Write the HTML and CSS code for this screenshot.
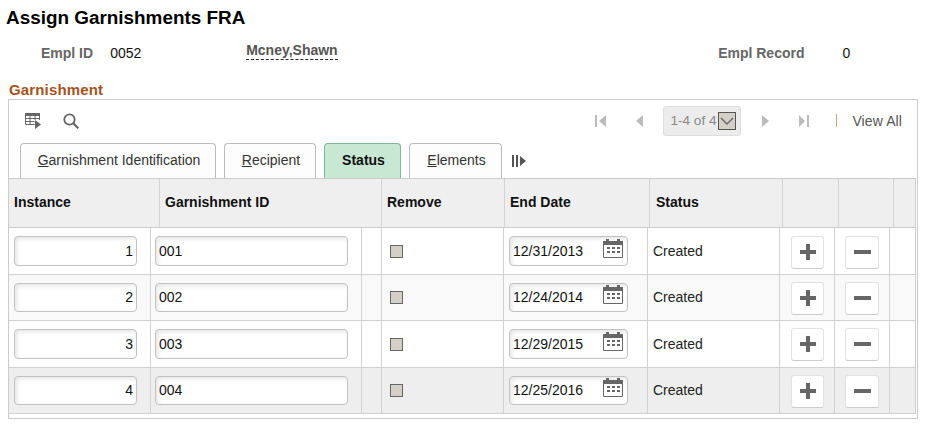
FILE: index.html
```html
<!DOCTYPE html>
<html lang="en">
<head>
<meta charset="utf-8">
<title>Assign Garnishments FRA</title>
<link rel="stylesheet" href="styles.css">
</head>
<body>
<svg class="defs" width="0" height="0" aria-hidden="true">
  <symbol id="cal" viewBox="0 0 20 20">
    <path fill="#666" d="M0 2h3V0h3v2h8V0h3v2h3v4H0z"/>
    <path fill="none" stroke="#666" d="M.5 5v13.5h19V5"/>
    <path fill="#666" d="M4 8h3v2H4zM9 8h3v2H9zM14 8h3v2h-3zM4 12h3v2H4zM9 12h3v2H9zM14 12h3v2h-3z"/>
  </symbol>
  <symbol id="plus" viewBox="0 0 16 16"><path fill="#666" d="M6 0h4v6h6v4h-6v6H6v-6H0V6h6z"/></symbol>
  <symbol id="minus" viewBox="0 0 17 4"><path fill="#666" d="M0 0h17v4H0z"/></symbol>
</svg>
<h1 class="title">Assign Garnishments FRA</h1>
<div class="empl">
  <span class="lbl lbl-id">Empl ID</span>
  <span class="val val-id">0052</span>
  <span class="name">Mcney,Shawn</span>
  <span class="lbl lbl-rec">Empl Record</span>
  <span class="val val-rec">0</span>
</div>
<h2 class="section">Garnishment</h2>
<div class="frame">
  <div class="toolbar">
    <svg class="ico-grid" width="16" height="16" viewBox="0 0 16 16">
      <path fill="#666" d="M0 0h15v3H0z"/>
      <path fill="none" stroke="#666" d="M.5 3v8.5h9M5 3v8.5M10 3v4M.5 5.5h14M.5 8.5h9M14.5 3v4"/>
      <path fill="#666" d="M10 7l6 4.5-6 4.5z"/>
    </svg>
    <svg class="ico-search" width="16" height="16" viewBox="0 0 16 16">
      <circle cx="6.5" cy="6.5" r="5.2" fill="none" stroke="#666" stroke-width="1.8"/>
      <path stroke="#666" stroke-width="2.2" d="M10.3 10.3l5 5"/>
    </svg>
    <div class="pager">
      <svg class="nav" width="11" height="12" viewBox="0 0 11 12"><path fill="#bbb" d="M0 0h2v12H0zM11 0v12L4 6z"/></svg>
      <svg class="nav nav-prev" width="7" height="12" viewBox="0 0 7 12"><path fill="#bbb" d="M7 0v12L0 6z"/></svg>
      <div class="range">1-4 of 4<span class="drop"><svg width="14" height="8" viewBox="0 0 14 8"><path fill="none" stroke="#666" stroke-width="1.4" d="M1 1l6 6 6-6"/></svg></span></div>
      <svg class="nav nav-next" width="7" height="12" viewBox="0 0 7 12"><path fill="#bbb" d="M0 0v12l7-6z"/></svg>
      <svg class="nav nav-last" width="10" height="12" viewBox="0 0 10 12"><path fill="#bbb" d="M0 0v12l6-6zM8 0h2v12H8z"/></svg>
      <span class="pipe"></span>
      <span class="viewall">View All</span>
    </div>
  </div>
  <div class="tabs">
    <div class="tab tab-a"><span><u>G</u>arnishment Identification</span></div>
    <div class="tab tab-b"><span><u>R</u>ecipient</span></div>
    <div class="tab tab-c is-active"><span>Status</span></div>
    <div class="tab tab-d"><span><u>E</u>lements</span></div>
    <svg class="tabmore" width="14" height="12" viewBox="0 0 14 12"><path fill="#555" d="M0 0h2v12H0zM4 0h2v12H4zM8 1v10l6-5z"/></svg>
  </div>
  <div class="grid">
    <div class="head">
      <div>Instance</div><div>Garnishment ID</div><div>Remove</div><div>End Date</div><div>Status</div><div></div><div></div><div></div>
    </div>
    <div class="row row-odd row-1">
      <div class="c"><input class="inp inp-n" value="1"></div>
      <div class="c"><input class="inp inp-id" value="001"></div>
      <div class="c"></div>
      <div class="c"><span class="chk"></span></div>
      <div class="c"><div class="inp date">12/31/2013<svg width="20" height="20"><use href="#cal"/></svg></div></div>
      <div class="c txt">Created</div>
      <div class="c"><span class="btn btn-p"><svg width="16" height="16"><use href="#plus"/></svg></span></div>
      <div class="c"><span class="btn btn-m"><svg width="17" height="4"><use href="#minus"/></svg></span></div>
      <div class="c"></div>
    </div>
    <div class="row row-even row-2">
      <div class="c"><input class="inp inp-n" value="2"></div>
      <div class="c"><input class="inp inp-id" value="002"></div>
      <div class="c"></div>
      <div class="c"><span class="chk"></span></div>
      <div class="c"><div class="inp date">12/24/2014<svg width="20" height="20"><use href="#cal"/></svg></div></div>
      <div class="c txt">Created</div>
      <div class="c"><span class="btn btn-p"><svg width="16" height="16"><use href="#plus"/></svg></span></div>
      <div class="c"><span class="btn btn-m"><svg width="17" height="4"><use href="#minus"/></svg></span></div>
      <div class="c"></div>
    </div>
    <div class="row row-odd row-3">
      <div class="c"><input class="inp inp-n" value="3"></div>
      <div class="c"><input class="inp inp-id" value="003"></div>
      <div class="c"></div>
      <div class="c"><span class="chk"></span></div>
      <div class="c"><div class="inp date">12/29/2015<svg width="20" height="20"><use href="#cal"/></svg></div></div>
      <div class="c txt">Created</div>
      <div class="c"><span class="btn btn-p"><svg width="16" height="16"><use href="#plus"/></svg></span></div>
      <div class="c"><span class="btn btn-m"><svg width="17" height="4"><use href="#minus"/></svg></span></div>
      <div class="c"></div>
    </div>
    <div class="row row-even row-4">
      <div class="c"><input class="inp inp-n" value="4"></div>
      <div class="c"><input class="inp inp-id" value="004"></div>
      <div class="c"></div>
      <div class="c"><span class="chk"></span></div>
      <div class="c"><div class="inp date">12/25/2016<svg width="20" height="20"><use href="#cal"/></svg></div></div>
      <div class="c txt">Created</div>
      <div class="c"><span class="btn btn-p"><svg width="16" height="16"><use href="#plus"/></svg></span></div>
      <div class="c"><span class="btn btn-m"><svg width="17" height="4"><use href="#minus"/></svg></span></div>
      <div class="c"></div>
    </div>
  </div>
</div>
</body>
</html>
```

FILE: styles.css
```css
* { box-sizing: border-box; }
html, body { margin: 0; padding: 0; background: #fff; }
body {
  width: 929px;
  height: 429px;
  overflow: hidden;
  font-family: "Liberation Sans", Arial, sans-serif;
  font-size: 14px;
  color: #111;
}
.defs { display: block; height: 0; }

.title {
  margin: 0;
  padding: 7px 0 0 6px;
  height: 42px;
  font-size: 18.9px;
  line-height: 21px;
  font-weight: bold;
  color: #000;
}

.empl { display: flex; height: 24px; padding-top: 3px; line-height: 17px; }
.lbl { font-weight: bold; color: #666; }
.lbl-id { margin-left: 41px; }
.val-id { margin-left: 17px; width: 136px; }
.name {
  width: 92px;
  height: 18px;
  margin-top: -3px;
  font-weight: bold;
  color: #555;
  border-bottom: 1px dashed #222;
  white-space: nowrap;
}
.lbl-rec { margin-left: 380px; }
.val-rec { margin-left: 38px; }

.section {
  margin: 0;
  height: 33px;
  padding: 15px 0 0 9px;
  font-size: 15px;
  line-height: 18px;
  font-weight: bold;
  color: #a5531c;
  letter-spacing: .15px;
}

.frame {
  width: 910px;
  height: 320px;
  margin-left: 8px;
  border: 1px solid #ccc;
}

.toolbar { display: flex; align-items: center; height: 43px; padding-bottom: 2px; }
.ico-grid { margin-left: 16px; }
.ico-search { margin-left: 22px; margin-top: 1px; }
.pager { display: flex; align-items: center; margin-left: auto; }
.nav-prev { margin-left: 30px; }
.nav-next { margin-left: 21px; }
.nav-last { margin-left: 30px; }
.range {
  display: flex;
  align-items: center;
  width: 78px;
  height: 30px;
  margin-left: 20px;
  padding: 0 4px 0 6px;
  background: #ececec;
  border: 1px solid #ddd;
  border-radius: 3px;
  color: #888;
  font-size: 13.6px;
  white-space: nowrap;
}
.drop {
  display: flex;
  align-items: center;
  justify-content: center;
  width: 18px;
  height: 18px;
  margin-left: auto;
  background: #d4d0c8;
  border: 1px solid #555;
}
.pipe { width: 1px; height: 13px; margin-left: 27px; background: #c9a77e; }
.viewall { margin-left: 15px; margin-right: 15px; color: #555; letter-spacing: .1px; }

.tabs { display: flex; align-items: flex-end; height: 35px; padding-left: 11px; gap: 8px; }
.tab {
  display: flex;
  align-items: center;
  justify-content: center;
  height: 35px;
  padding: 0 0 2px 2px;
  background: #fdfdfd;
  border: 1px solid #bbb;
  border-bottom: 0;
  border-radius: 4px 4px 0 0;
  color: #333;
}
.tab-a { width: 196px; }
.tab-b { width: 92px; }
.tab-c { width: 77px; }
.tab-d { width: 93px; }
.is-active { background: #c8e8d4; border-color: #7fb898; color: #111; font-weight: bold; }
.tabmore { margin: 0 0 0 2px; align-self: center; }

.grid { width: 907px; border-right: 1px solid #ccc; }

.head {
  display: grid;
  grid-template-columns: 151px 222px 123px 145px 133px 56px 55px 22px;
  height: 50px;
  background: #efefef;
  border-top: 1px solid #ccc;
  border-bottom: 1px solid #ccc;
  font-weight: bold;
  color: #111;
}
.head > div {
  display: flex;
  align-items: center;
  padding: 0 0 2px 5px;
  border-right: 1px solid #d4d4d4;
}
.head > div:nth-child(5) { padding-left: 6px; }
.head > div:last-child { border-right: 0; }

.row {
  display: grid;
  grid-template-columns: 142px 211px 20px 122px 144px 132px 55px 55px 26px;
  border-bottom: 1px solid #d2d2d2;
}
.row-odd { height: 47px; }
.row-even { height: 46px; }
.row-2 { background: #f9f9f9; }
.row-4 { background: #eee; }
.c {
  display: flex;
  align-items: flex-start;
  padding: 8px 0 0 5px;
  border-right: 1px solid #d2d2d2;
}
.c:last-child { border-right: 0; }

.inp {
  height: 30px;
  padding: 0 3px;
  font: 14px "Liberation Sans", Arial, sans-serif;
  color: #111;
  background: #fff;
  border: 1px solid #c2c2c2;
  border-radius: 4px;
  box-shadow: inset 2px 2px 4px rgba(0, 0, 0, .1);
  outline: none;
}
.row-even .inp { height: 29px; padding-bottom: 1px; }
.inp-n { width: 123px; text-align: right; }
.inp-id { width: 193px; margin-left: -1px; }
.date { display: flex; align-items: center; justify-content: space-between; width: 119px; }
.date svg { margin-right: 1px; margin-top: -4px; }

.chk {
  width: 13px;
  height: 13px;
  margin: 9px 0 0 3px;
  background: #d4d0c8;
  border: 1px solid #666;
}
.row-even .chk { margin-top: 8px; }

.c.txt { padding-top: 15px; line-height: 17px; color: #222; }
.row-even .c.txt { padding-top: 14px; }

.btn {
  display: flex;
  align-items: center;
  justify-content: center;
  height: 33px;
  padding-bottom: 2px;
  background: #fff;
  border: 1px solid #e2e2e2;
  border-bottom-color: #ccc;
  border-radius: 3px;
}
.row-even .btn, .row-3 .btn { margin-top: -1px; }
.btn-p { width: 33px; margin-left: 6px; }
.btn-m { width: 34px; margin-left: 5px; }
```
